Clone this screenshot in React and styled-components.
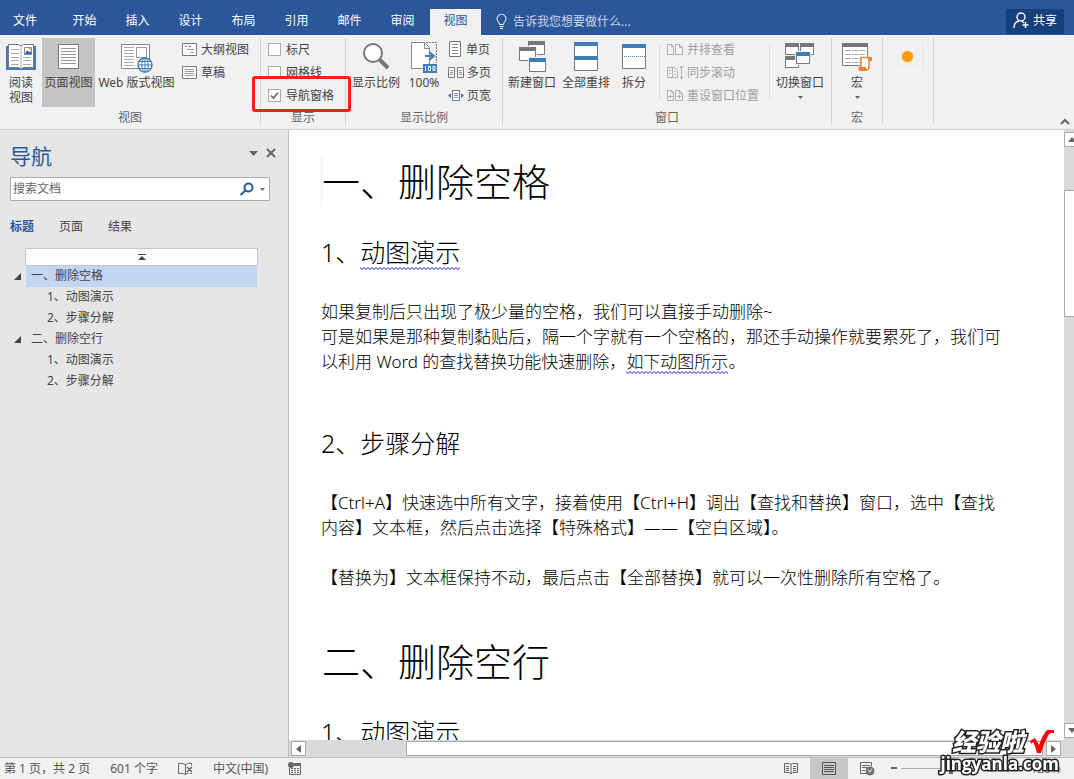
import React from "react";
import styled, { createGlobalStyle, css } from "styled-components";

const Global = createGlobalStyle`
  *, *::before, *::after { box-sizing: border-box; }
  body {
    margin: 0;
    font-family: "Noto Sans", "Noto Sans CJK SC", sans-serif;
    font-size: 12px;
    line-height: 20px;
    color: #444;
    background: #e6e6e6;
  }
  button, input { font: inherit; color: inherit; }
  button { border: 0; padding: 0; background: none; }
  h1, h2, h3, p, ul { margin: 0; padding: 0; font-weight: inherit; }
  svg { display: block; flex: none; }
`;

const Shell = styled.div`
  height: 100vh;
  display: flex;
  flex-direction: column;
  overflow: hidden;
`;

/* title bar */
const TopBar = styled.header`
  display: flex;
  align-items: flex-end;
  height: 35px;
  flex: none;
  padding-right: 10px;
  background: #2b579a;
  color: #fff;
`;
const TabList = styled.nav`
  display: flex;
  gap: 2px;
`;
const Tab = styled.button`
  width: ${(p) => (p.$file ? 50 : 51)}px;
  margin-right: ${(p) => (p.$file ? 7 : 0)}px;
  height: 26px;
  padding-bottom: 3px;
  ${(p) => p.$active && css`background: #f1f1f1; color: #2b579a;`}
`;
const TellMe = styled.button`
  display: flex;
  align-items: center;
  gap: 6px;
  height: 26px;
  margin-left: 15px;
  color: #c9d6ea;
`;
const Share = styled.button`
  display: flex;
  align-items: center;
  justify-content: center;
  gap: 4px;
  width: 58px;
  height: 25px;
  margin: 0 0 1px auto;
  padding-bottom: 2px;
  background: #15417b;
  color: #fff;
`;

/* ribbon */
const Ribbon = styled.div`
  display: flex;
  flex: none;
  height: 95px;
  padding: 3px 0 4px;
  background: #f1f1f1;
  border-bottom: 1px solid #d2d2d2;
`;
const Group = styled.section`
  display: flex;
  flex-direction: column;
  width: ${(p) => p.$w}px;
  border-right: 1px solid #d2d2d2;
`;
const GroupBody = styled.div`
  display: flex;
  flex: 1;
  gap: ${(p) => p.$gap || 0}px;
  padding-left: ${(p) => p.$pad || 0}px;
`;
const GroupLabel = styled.div`
  height: 14px;
  line-height: 14px;
  text-align: center;
  color: #666;
`;
const BigButton = styled.button`
  display: flex;
  flex-direction: column;
  align-items: center;
  width: ${(p) => p.$w}px;
  height: 69px;
  line-height: 15px;
  white-space: nowrap;
  background: ${(p) => (p.$active ? "#c5c5c5" : "none")};
`;
const BigIcon = styled.span`
  display: flex;
  align-items: center;
  height: 36px;
  padding-top: 2px;
  margin-bottom: 1px;
`;
const SmallColumn = styled.div`
  display: flex;
  flex-direction: column;
`;
const SmallButton = styled.button`
  display: flex;
  align-items: center;
  gap: 3px;
  height: 23px;
  white-space: nowrap;
  color: ${(p) => (p.disabled ? "#a0a0a0" : "#444")};
`;
const InnerRule = styled.div`
  width: 1px;
  height: 55px;
  margin-top: 7px;
  background: #dcdcdc;
`;
const Check = styled.label`
  position: relative;
  display: flex;
  align-items: center;
  gap: 5px;
  height: 23px;
  input {
    appearance: none;
    width: 13px;
    height: 13px;
    margin: 0;
    background: #fff;
    border: 1px solid #ababab;
  }
  input:checked {
    background: #fff url("data:image/svg+xml,%3Csvg xmlns='http://www.w3.org/2000/svg' viewBox='0 0 11 11'%3E%3Cpath d='M2 5.5 4.5 8 9 2.5' fill='none' stroke='%23666' stroke-width='1.6'/%3E%3C/svg%3E");
  }
`;
const Highlight = styled.span`
  position: absolute;
  left: -16px;
  top: -8px;
  width: 99px;
  height: 36px;
  border: 3px solid #fc2010;
  border-radius: 3px;
`;
const RecordDot = styled.div`
  display: flex;
  align-items: center;
  justify-content: center;
  width: 30px;
  height: 28px;
  margin-top: 5px;
  border-right: 1px solid #e6e6e6;
  border-bottom: 1px solid #fafafa;
  &::before {
    content: "";
    width: 11px;
    height: 11px;
    border-radius: 50%;
    background: #ff9a0c;
    box-shadow: 0 0 2px #ffb95a;
  }
`;
const Collapse = styled.button`
  align-self: flex-end;
  margin: 0 4px 0 auto;
`;

/* body */
const Main = styled.div`
  display: flex;
  flex: 1;
  min-height: 0;
`;
const Nav = styled.aside`
  width: 289px;
  flex: none;
  padding: 13px 12px 0 10px;
  background: #e6e6e6;
  border-right: 1px solid #bdbdbd;
`;
const NavHead = styled.div`
  display: flex;
  align-items: flex-start;
  gap: 8px;
  height: 26px;
  button { height: 20px; }
  h2 {
    flex: 1;
    font-size: 21px;
    line-height: 26px;
    color: #2b579a;
  }
`;
const Search = styled.div`
  display: flex;
  align-items: center;
  gap: 6px;
  height: 24px;
  margin: 8px 6px 16px 0;
  padding: 0 4px 0 2px;
  background: #fff;
  border: 1px solid #ababab;
  input {
    flex: 1;
    min-width: 0;
    padding: 0;
    border: 0;
    outline: 0;
    background: none;
  }
  input::placeholder { color: #666; }
`;
const NavTabs = styled.div`
  display: flex;
  gap: 25px;
  height: 20px;
`;
const NavTab = styled.button`
  font-weight: ${(p) => (p.$active ? 700 : 400)};
  color: ${(p) => (p.$active ? "#2b579a" : "#444")};
`;
const Outline = styled.ul`
  list-style: none;
  margin: 11px 19px 0 -2px;
`;
const ToTop = styled.button`
  display: flex;
  align-items: center;
  justify-content: center;
  width: 233px;
  height: 18px;
  margin-left: 17px;
  background: #fdfdfd;
  border: 1px solid #c6c6c6;
`;
const OutlineRow = styled.li`
  display: flex;
  align-items: center;
  height: 21px;
  line-height: 20px;
  svg { margin: 0 5px 0 6px; }
`;
const OutlineLink = styled.a`
  flex: 1;
  height: 21px;
  margin-left: ${(p) => (p.$sub ? 18 : 0)}px;
  padding-left: ${(p) => (p.$sub ? 21 : 5)}px;
  color: #444;
  text-decoration: none;
  background: ${(p) => (p.$active ? "#c2d5f2" : "none")};
`;

const DocArea = styled.div`
  display: flex;
  flex-direction: column;
  flex: 1;
  min-width: 0;
`;
const Page = styled.article`
  flex: 1;
  min-height: 0;
  overflow: hidden;
  padding: 26px 32px 0;
  background: #fff;
  color: #000;
  white-space: nowrap;
`;
const Title = styled.h1`
  height: 50px;
  margin-bottom: 28px;
  font-size: 38px;
  line-height: 50px;
  font-weight: 300;
  border-left: 1px solid ${(p) => (p.$first ? "#eee" : "transparent")};
`;
const Sub = styled.h2`
  height: 36px;
  margin-bottom: 29px;
  font-size: 25px;
  line-height: 36px;
  font-weight: 300;
`;
const Para = styled.p`
  margin-bottom: ${(p) => p.$after}px;
  font-size: 17px;
  line-height: 25px;
  font-weight: 300;
`;
const Wavy = styled.span`
  padding-bottom: 1px;
  background: url("data:image/svg+xml,%3Csvg xmlns='http://www.w3.org/2000/svg' width='4' height='3'%3E%3Cpath d='M-1 -.5 0 .5 2 2.5 4 .5 5 -.5' fill='none' stroke='%231818f0'/%3E%3C/svg%3E") left bottom / 4px 3px repeat-x;
`;

const HBar = styled.div`
  display: flex;
  align-items: center;
  gap: 3px;
  height: 17px;
  flex: none;
  padding: 0 3px 0 2px;
  background: #dadada;
`;
const ScrollButton = styled.button`
  display: flex;
  align-items: center;
  justify-content: center;
  flex: none;
  width: 15px;
  height: 15px;
  background: #fff;
  border: 1px solid #ababab;
`;
const HThumb = styled.div`
  flex: 1;
  height: 15px;
  margin-left: 97px;
  background: #fff;
  border: 1px solid #ababab;
`;
const VBar = styled.div`
  display: flex;
  flex-direction: column;
  align-items: flex-start;
  width: 10px;
  flex: none;
  padding: 2px 0 19px;
  overflow: hidden;
  background: #dadada;
`;
const VThumb = styled.div`
  width: 15px;
  height: 127px;
  margin: 43px 0 auto;
  background: #fff;
  border: 1px solid #ababab;
`;

/* status bar */
const Status = styled.footer`
  display: flex;
  align-items: center;
  flex: none;
  height: 22px;
  padding: 0 13px 0 4px;
  background: #f1f1f1;
  border-top: 1px solid #bdbdbd;
  color: #555;
`;
const StatusItems = styled.div`
  display: flex;
  align-items: center;
  gap: 20px;
  flex: 1;
`;
const ViewButton = styled.button`
  display: flex;
  align-items: center;
  justify-content: center;
  width: 38px;
  height: 21px;
  background: ${(p) => (p.$active ? "#c8c8c8" : "none")};
`;
const Zoom = styled.div`
  display: flex;
  align-items: center;
  gap: 4px;
  margin-left: 5px;
  input {
    appearance: none;
    width: 100px;
    height: 11px;
    margin: 0;
    background: linear-gradient(#aaa, #aaa) center / 100% 1px no-repeat;
  }
  input::-webkit-slider-thumb {
    appearance: none;
    width: 4px;
    height: 11px;
    background: #666;
  }
  output { margin-left: 14px; color: #777; }
`;

const Watermark = styled.div`
  position: fixed;
  right: 15px;
  bottom: 7px;
  display: flex;
  flex-direction: column;
  align-items: flex-end;
  color: #fff;
  font-weight: 900;
  -webkit-text-stroke: 3px #222;
  paint-order: stroke fill;
  pointer-events: none;
`;
const MarkTop = styled.div`
  display: flex;
  align-items: center;
  gap: 5px;
  margin-right: 5px;
  font-size: 24px;
  font-style: italic;
  line-height: 26px;
`;
const MarkBottom = styled.div`
  font-family: "Open Sans", sans-serif;
  font-weight: 700;
  font-size: 17px;
  line-height: 17px;
`;

/* icons */
const Svg = ({ w, h, children, ...rest }) => (
  <svg width={w} height={h} viewBox={`0 0 ${w} ${h}`} fill="none" aria-hidden="true" {...rest}>{children}</svg>
);
const lines = (x1, x2, ys, stroke = "#8a8a8a") => ys.map((y) => <path key={`${x1}-${y}`} d={`M${x1} ${y}.5H${x2}`} stroke={stroke} />);

const ReadIcon = () => (
  <Svg w={32} h={28}>
    <path d="M1 3h30v24H1z" fill="#3f7cb8" />
    <path d="M3.500 1.500h10l2.500 1.500 2.500-1.500h10v23h-10L16 26l-2.500-1.500h-10z" fill="#fff" stroke="#777" />
    <path d="M16 3v22" stroke="#aaa" />
    {lines(6, 14, [6, 10, 14, 17, 21], "#aaa")}
    {lines(18, 26, [14, 17, 21], "#aaa")}
    <path d="M19.500 4.500h7v7h-7z" fill="#fff" stroke="#888" />
    <path d="m20 11 2-4 2 2 1-1 2 3z" fill="#2f6da8" />
    <path d="M24 5h2v2h-2z" fill="#f2b04a" />
  </Svg>
);
const PageIcon = () => (
  <Svg w={21} h={28}>
    <path d="M.5 1.500h20v24H.5z" fill="#fff" stroke="#777" />
    {lines(3, 18, [5, 8, 11, 14, 17, 20], "#999")}
  </Svg>
);
const Globe = ({ color = "#3f7cb8" }) => (
  <g stroke={color} fill="#fff">
    <circle cx="8" cy="8" r="7" strokeWidth="1.400" />
    <ellipse cx="8" cy="8" rx="3.200" ry="7" />
    <path d="M8 1v14M1 8h14M2 4.500h12M2 11.500h12" />
  </g>
);
const WebIcon = () => (
  <Svg w={32} h={31}>
    <path d="M.5 2.500h28v24H.5z" fill="#fff" stroke="#888" />
    {lines(3, 13, [5, 8, 11, 14, 17, 20, 23], "#aaa")}
    <path d="M15.500 5.500h10v10h-10z" stroke="#999" />
    <g transform="translate(16 15)"><Globe /></g>
  </Svg>
);
const OutlineIcon = () => (
  <Svg w={16} h={14}>
    <path d="M.5.500h14v12H.5z" fill="#fff" stroke="#777" />
    <path d="M3 3.500h2m1 0h3M5 6.500h2m1 0h4M7 9.500h1m1 0h3" stroke="#888" />
  </Svg>
);
const DraftIcon = () => (
  <Svg w={16} h={14}>
    <path d="M.5.500h14v12H.5z" fill="#fff" stroke="#777" />
    {lines(3, 12, [3, 5, 7, 9], "#999")}
  </Svg>
);
const LensIcon = () => (
  <Svg w={30} h={30}>
    <circle cx="12" cy="11" r="9" fill="#fff" stroke="#777" strokeWidth="2" />
    <path d="m18 17 9 9" stroke="#777" strokeWidth="4" />
  </Svg>
);
const FullZoomIcon = () => (
  <Svg w={28} h={32}>
    <path d="M1.500 1.500h13l5 5v21h-18z" fill="#fff" stroke="#888" />
    <path d="M14.500 1.500v6h5" stroke="#888" />
    <path d="M16 1.500h10.500V22" stroke="#777" strokeDasharray="2 1" />
    <path d="M15 15h8m-4-4 5 4-5 4" stroke="#3f7cb8" strokeWidth="2" />
    <path d="M13 23h14v9H13z" fill="#3f7cb8" />
    <path d="M15.500 25v5M18.500 25.500h2v4h-2zM23 25.500h2v4h-2z" stroke="#fff" />
  </Svg>
);
const OnePageIcon = () => (
  <Svg w={15} h={17}>
    <path d="M1.500.500h11v15h-11z" fill="#fff" stroke="#777" />
    {lines(4, 10, [3, 6, 9, 12])}
  </Svg>
);
const MultiPageIcon = () => (
  <Svg w={16} h={12}>
    <path d="M.5.500h6v10h-6zM9.500.500h6v10h-6z" fill="#fff" stroke="#777" />
    {lines(2, 5, [3, 5, 7])}{lines(11, 14, [3, 5, 7])}
  </Svg>
);
const WidthIcon = () => (
  <Svg w={16} h={12}>
    <path d="M4.500.500h7v10h-7z" fill="#fff" stroke="#777" />
    {lines(6, 10, [3, 5, 7])}
    <path d="M3 3v5L0 5.500zM13 3v5l3-2.500z" fill="#3f7cb8" />
  </Svg>
);
const Win = ({ x, y, w, h, c = "#777" }) => (
  <g>
    <path d={`M${x + 0.5} ${y + 0.5}h${w - 1}v${h - 1}h${1 - w}z`} fill="#fff" stroke="#777" />
    <path d={`M${x} ${y}h${w}v4h-${w}z`} fill={c} />
  </g>
);
const NewWinIcon = () => (
  <Svg w={28} h={32}>
    <Win x={10} y={0} w={17} h={14} />
    <path d="M0 5h19v17H0z" fill="#f1f1f1" />
    <Win x={1} y={6} w={17} h={14} />
    <path d="M10 16h18v16H10z" fill="#f1f1f1" />
    <Win x={11} y={17} w={17} h={14} c="#3f7cb8" />
  </Svg>
);
const ArrangeIcon = () => (
  <Svg w={26} h={30}>
    <Win x={1} y={0} w={24} h={15} c="#3f7cb8" />
    <Win x={1} y={14} w={24} h={15} c="#3f7cb8" />
  </Svg>
);
const SplitIcon = () => (
  <Svg w={26} h={26}>
    <Win x={1} y={0} w={24} h={25} c="#3f7cb8" />
    <path d="M3 12.500h21" stroke="#3f7cb8" strokeDasharray="1 1" />
  </Svg>
);
const SwitchIcon = () => (
  <Svg w={30} h={28}>
    <Win x={0} y={0} w={14} h={12} />
    <Win x={15} y={0} w={14} h={12} />
    <Win x={0} y={13} w={14} h={12} />
    <path d="M10 8h16v14H10z" fill="#f1f1f1" />
    <Win x={11} y={9} w={14} h={12} c="#3f7cb8" />
  </Svg>
);
const MacroIcon = () => (
  <Svg w={32} h={29}>
    <Win x={1} y={0} w={26} h={23} />
    <path d="M4 7.500h20M4 11.500h20M4 15.500h20M4 19.500h20" stroke="#aaa" strokeDasharray="6 1" />
    <path d="M20 15h9v12h-9z" fill="#fff" />
    <path d="M20 24V14.500h8V24q0 3-3 3" stroke="#e8833a" strokeWidth="1.500" />
    <path d="M17 24h8v4h-6q-2-1-2-4zM27 14h4v4h-3z" fill="#e8833a" />
  </Svg>
);
const SideIcon = ({ kind }) => (
  <Svg w={17} h={13} stroke="#b4acb4">
    {kind === "sync" ? (
      <>
        <path d="M.5 1.500h7l3 3v7H.5zM5.500 1.500v10M2 4.500h2M2 7.500h2M7 5.500h2M7 8.500h2" />
        <path d="M14.500 0v13M13 2l1.500-2L16 2M13 11l1.500 2 1.500-2" />
      </>
    ) : (
      <>
        <path d="M.5 1.500h4l2 2v8h-6zM8.500 1.500h4l3 3v7h-7z" fill="#f7f2f7" />
        <path d="M4.500 1.500v2h2M12.500 1.500v3h3" />
        {kind === "reset" && <path d="M1 7.500h5M10 7.500h4M3.500 5.500v4M12.500 5.500v4" />}
      </>
    )}
  </Svg>
);
const Caret = ({ s = 5, c = "#666" }) => <Svg w={s * 2 - 1} h={s}><path d={`M0 0h${s * 2 - 1}L${s - 0.5} ${s}z`} fill={c} /></Svg>;
const Drop = styled.span`
  display: flex;
  margin-top: 6px;
`;
const Expand = () => <Svg w={7} h={7}><path d="M7 0v7H0z" fill="#444" /></Svg>;

const TABS = ["文件", "开始", "插入", "设计", "布局", "引用", "邮件", "审阅", "视图"];
const OUTLINE = [
  { text: "一、删除空格", active: true },
  { text: "1、动图演示", sub: true },
  { text: "2、步骤分解", sub: true },
  { text: "二、删除空行" },
  { text: "1、动图演示", sub: true },
  { text: "2、步骤分解", sub: true },
];

const Big = ({ icon, children, drop, ...rest }) => (
  <BigButton type="button" {...rest}>
    <BigIcon>{icon}</BigIcon>
    <span>{children}</span>
    {drop && <Drop><Caret s={3} /></Drop>}
  </BigButton>
);
const Small = ({ icon, children, ...rest }) => (
  <SmallButton type="button" {...rest}>{icon}{children}</SmallButton>
);

export default function App() {
  return (
    <Shell>
      <Global />
      <TopBar>
        <TabList>
          {TABS.map((t, i) => <Tab key={t} type="button" $file={i === 0} $active={t === "视图"}>{t}</Tab>)}
        </TabList>
        <TellMe type="button">
          <Svg w={11} h={16} stroke="#fff"><path d="M3.500 10.500Q3.500 9 2 7.500A4.500 4.500 0 1 1 9 7.500Q7.500 9 7.500 10.500zM3.500 12.500h4M4 14.500h3" /></Svg>
          告诉我您想要做什么...
        </TellMe>
        <Share type="button">
          <Svg w={16} h={17} stroke="#fff" strokeWidth="1.400"><circle cx="8" cy="5" r="4" /><path d="M1 16q0-6 5-7M9 9l2 2M12.500 10v6M9.500 13h6" /></Svg>
          共享
        </Share>
      </TopBar>

      <Ribbon>
        <Group $w={261}>
          <GroupBody>
            <Big $w={42} icon={<ReadIcon />}>阅读<br />视图</Big>
            <Big $w={53} $active icon={<PageIcon />}>页面视图</Big>
            <Big $w={83} icon={<WebIcon />}>Web 版式视图</Big>
            <GroupBody $pad={4}>
              <SmallColumn>
                <Small icon={<OutlineIcon />}>大纲视图</Small>
                <Small icon={<DraftIcon />}>草稿</Small>
              </SmallColumn>
            </GroupBody>
          </GroupBody>
          <GroupLabel>视图</GroupLabel>
        </Group>
        <Group $w={85}>
          <GroupBody $pad={7}>
            <SmallColumn>
              <Check><input type="checkbox" />标尺</Check>
              <Check><input type="checkbox" />网格线</Check>
              <Check><input type="checkbox" defaultChecked />导航窗格<Highlight /></Check>
            </SmallColumn>
          </GroupBody>
          <GroupLabel>显示</GroupLabel>
        </Group>
        <Group $w={157}>
          <GroupBody $pad={4}>
            <Big $w={52} icon={<LensIcon />}>显示比例</Big>
            <Big $w={44} icon={<FullZoomIcon />}>100%</Big>
            <GroupBody $pad={2}>
              <SmallColumn>
                <Small icon={<OnePageIcon />}>单页</Small>
                <Small icon={<MultiPageIcon />}>多页</Small>
                <Small icon={<WidthIcon />}>页宽</Small>
              </SmallColumn>
            </GroupBody>
          </GroupBody>
          <GroupLabel>显示比例</GroupLabel>
        </Group>
        <Group $w={329}>
          <GroupBody $gap={2} $pad={3}>
            <Big $w={52} icon={<NewWinIcon />}>新建窗口</Big>
            <Big $w={52} icon={<ArrangeIcon />}>全部重排</Big>
            <Big $w={40} icon={<SplitIcon />}>拆分</Big>
            <GroupBody $gap={7} $pad={3}>
              <InnerRule />
              <SmallColumn>
                <Small disabled icon={<SideIcon kind="side" />}>并排查看</Small>
                <Small disabled icon={<SideIcon kind="sync" />}>同步滚动</Small>
                <Small disabled icon={<SideIcon kind="reset" />}>重设窗口位置</Small>
              </SmallColumn>
              <GroupBody $pad={3} $gap={4}>
                <InnerRule />
                <Big $w={52} drop icon={<SwitchIcon />}>切换窗口</Big>
              </GroupBody>
            </GroupBody>
          </GroupBody>
          <GroupLabel>窗口</GroupLabel>
        </Group>
        <Group $w={51}>
          <GroupBody>
            <Big $w={50} drop icon={<MacroIcon />}>宏</Big>
          </GroupBody>
          <GroupLabel>宏</GroupLabel>
        </Group>
        <Group $w={51}>
          <GroupBody $pad={10}><RecordDot /></GroupBody>
        </Group>
        <Collapse type="button" aria-label="折叠功能区">
          <Svg w={10} h={7}><path d="m1 6 4-4 4 4" stroke="#666" strokeWidth="2" /></Svg>
        </Collapse>
      </Ribbon>

      <Main>
        <Nav>
          <NavHead>
            <h2>导航</h2>
            <button type="button" aria-label="选项"><Caret /></button>
            <button type="button" aria-label="关闭"><Svg w={10} h={10}><path d="m1 1 8 8m0-8-8 8" stroke="#666" strokeWidth="2" /></Svg></button>
          </NavHead>
          <Search>
            <input type="text" placeholder="搜索文档" aria-label="搜索文档" />
            <Svg w={15} h={14} stroke="#2b579a" strokeWidth="2"><circle cx="9.500" cy="5.500" r="4" /><path d="m6.500 8.500-5 4.500" /></Svg>
            <Caret s={3} />
          </Search>
          <NavTabs>
            <NavTab type="button" $active>标题</NavTab>
            <NavTab type="button">页面</NavTab>
            <NavTab type="button">结果</NavTab>
          </NavTabs>
          <Outline>
            <li>
              <ToTop type="button" aria-label="转到开头"><Svg w={8} h={7}><path d="M0 .5h8" stroke="#444" /><path d="m4 2 4 4H0z" fill="#444" /></Svg></ToTop>
            </li>
            {OUTLINE.map((o, i) => (
              <OutlineRow key={i}>
                {!o.sub && <Expand />}
                <OutlineLink href="#" $sub={o.sub} $active={o.active}>{o.text}</OutlineLink>
              </OutlineRow>
            ))}
          </Outline>
        </Nav>

        <DocArea>
          <Page lang="zh-CN">
            <Title $first>一、删除空格</Title>
            <Sub>1、<Wavy>动图演示</Wavy></Sub>
            <Para $after={51}>
              如果复制后只出现了极少量的空格，我们可以直接手动删除~<br />
              可是如果是那种复制黏贴后，隔一个字就有一个空格的，那还手动操作就要累死了，我们可<br />
              以利用 Word 的查找替换功能快速删除，<Wavy>如下动图所示</Wavy>。
            </Para>
            <Sub>2、步骤分解</Sub>
            <Para $after={25}>
              【Ctrl+A】快速选中所有文字，接着使用【Ctrl+H】调出【查找和替换】窗口，选中【查找<br />
              内容】文本框，然后点击选择【特殊格式】——【空白区域】。
            </Para>
            <Para $after={46}>【替换为】文本框保持不动，最后点击【全部替换】就可以一次性删除所有空格了。</Para>
            <Title>二、删除空行</Title>
            <Sub>1、动图演示</Sub>
          </Page>
          <HBar>
            <ScrollButton type="button" aria-label="向左"><Svg w={5} h={8}><path d="M5 0v8L0 4z" fill="#666" /></Svg></ScrollButton>
            <HThumb />
            <ScrollButton type="button" aria-label="向右"><Svg w={5} h={8}><path d="M0 0v8l5-4z" fill="#666" /></Svg></ScrollButton>
          </HBar>
        </DocArea>
        <VBar>
          <ScrollButton type="button" aria-label="向上"><Svg w={8} h={5}><path d="M0 5h8L4 0z" fill="#666" /></Svg></ScrollButton>
          <VThumb />
          <ScrollButton type="button" aria-label="向下"><Svg w={8} h={5}><path d="M0 0h8L4 5z" fill="#666" /></Svg></ScrollButton>
        </VBar>
      </Main>

      <Status>
        <StatusItems>
          <span>第 1 页，共 2 页</span>
          <span>601 个字</span>
          <Svg w={15} h={14} stroke="#666"><path d="M7.500 2.500Q4 .5.500 1.500v10q4-1 7 1 1-1 3-1.200M7.500 2.500v10M7.500 2.500q3-2 6-1v2M14 11.500h-2" /><path d="m9 5 5 5m0-5-5 5" strokeWidth="1.400" /></Svg>
          <span>中文(中国)</span>
          <Svg w={14} h={13}><path d="M3.500 2.500h9v10h-11V6" stroke="#666" /><path d="M6 1h7v3H6z" fill="#666" /><circle cx="3" cy="3" r="3" fill="#666" /><path d="M3 6.500h9M3 8.500h9M3 10.500h9" stroke="#666" strokeDasharray="2 1" /></Svg>
        </StatusItems>
        <ViewButton type="button" aria-label="阅读视图">
          <Svg w={14} h={13} stroke="#666"><path d="M.5 1.500h5l1.500 1 1.500-1h5v9h-5L7 12l-1.500-1.500h-5zM7 2v10M2 4.500h3M2 6.500h3M2 8.500h3M9 4.500h3M9 6.500h3M9 8.500h3" /></Svg>
        </ViewButton>
        <ViewButton type="button" $active aria-label="页面视图">
          <Svg w={14} h={13} stroke="#555"><path d="M.5.500h13v12H.5zM2 3.500h10M2 5.500h10M2 7.500h10M2 9.500h10" /></Svg>
        </ViewButton>
        <ViewButton type="button" aria-label="Web 版式视图">
          <Svg w={15} h={14} stroke="#666"><path d="M6 11.500H.5V.5h11v4M2 3.500h8M2 5.500h5M2 8.500h3" /><circle cx="10" cy="9" r="4" fill="#777" /><path d="m8 8 2 2 2-3" stroke="#f1f1f1" /></Svg>
        </ViewButton>
        <Zoom>
          <Svg w={6} h={3}><path d="M0 0h6v2H0z" fill="#666" /></Svg>
          <input type="range" min="10" max="190" defaultValue="100" aria-label="缩放" />
          <Svg w={7} h={7}><path d="M0 3.500h7M3.500 0v7" stroke="#666" strokeWidth="2" /></Svg>
          <output>120%</output>
        </Zoom>
      </Status>

      <Watermark>
        <MarkTop>
          经验啦
          <Svg w={25} h={26}><path d="m1 12 5-3 4 7Q14 5 18 1h7v3q-4-1-6 3-4 7-7 17H8Q6 16 4 13l-2 2z" fill="#f00" /></Svg>
        </MarkTop>
        <MarkBottom>jingyanla.com</MarkBottom>
      </Watermark>
    </Shell>
  );
}
